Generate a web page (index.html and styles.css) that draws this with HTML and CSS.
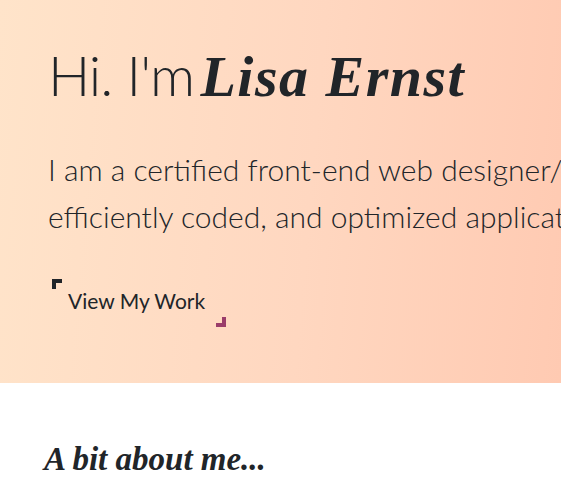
FILE: index.html
```html
<!DOCTYPE html>
<html lang="en">
<head>
<meta charset="utf-8">
<title>Lisa Ernst</title>
<link rel="stylesheet" href="styles.css">
</head>
<body>
<header class="hero">
  <div class="hero-inner">
    <h1 class="hero-title"><span class="greet">Hi. I'm</span> <span class="name">Lisa Ernst</span></h1>
    <p class="lead">I am a certified front-end web designer/developer who creates beautiful, efficiently coded, and optimized applications.</p>
    <a class="btn-work" href="#work">View My Work</a>
  </div>
</header>
<section class="about">
  <h2 class="about-title">A bit about me...</h2>
</section>
</body>
</html>
```
FILE: styles.css
```css
html, body {
  margin: 0;
  padding: 0;
  overflow: hidden;
  background: #ffffff;
  color: #212529;
  font-family: "Lato", "Open Sans", sans-serif;
}

.hero {
  height: 383px;
  background: linear-gradient(95deg, #ffe4ca 0%, #ffd7c0 55%, #ffcab2 100%);
  box-sizing: border-box;
  padding: 41px 0 0 48px;
}

.hero-inner {
  width: 980px;
}

.hero-title {
  margin: 0;
  font-size: 56px;
  font-weight: 300;
  line-height: 67px;
  color: #212529;
  white-space: nowrap;
}

.greet {
  letter-spacing: -1px;
}

.name {
  margin-left: -9px;
  font-family: "Liberation Serif", "DejaVu Serif", serif;
  font-style: italic;
  font-weight: 700;
  font-size: 58px;
  letter-spacing: 1.5px;
}

.lead {
  margin: 36px 0 0 0;
  font-size: 30px;
  font-weight: 300;
  line-height: 47px;
}

.btn-work {
  position: relative;
  display: inline-block;
  margin: 39px 0 0 4px;
  padding: 8px 21px 12px 16px;
  font-size: 21px;
  line-height: 28px;
  color: #212529;
  text-decoration: none;
}

.btn-work::before,
.btn-work::after {
  content: "";
  position: absolute;
  width: 6px;
  height: 6px;
}

.btn-work::before {
  top: 0;
  left: 0;
  border-top: 4px solid #212529;
  border-left: 4px solid #212529;
}

.btn-work::after {
  right: 0;
  bottom: 0;
  border-bottom: 4px solid #9a3d6a;
  border-right: 4px solid #9a3d6a;
}

.about {
  padding: 56px 48px 0 44px;
}

.about-title {
  margin: 0;
  font-family: "Liberation Serif", "DejaVu Serif", serif;
  font-style: italic;
  font-weight: 700;
  font-size: 33px;
  line-height: 40px;
}
```
